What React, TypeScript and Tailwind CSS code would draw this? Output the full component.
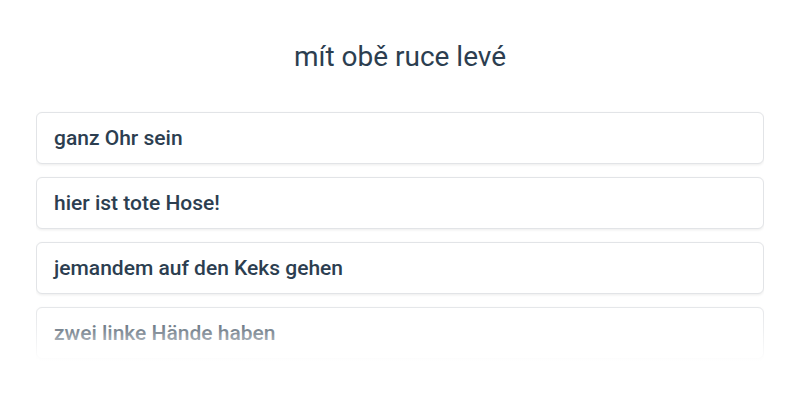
export default function App() {
  const items = [
    'ganz Ohr sein',
    'hier ist tote Hose!',
    'jemandem auf den Keks gehen',
    'zwei linke Hände haben',
  ]

  return (
    <div className="min-h-screen bg-white font-['Roboto',sans-serif] text-[#2c3e50]">
      <div className="px-9 pt-[39px]">
        <h1 className="text-center text-[28px] leading-9">mít obě ruce levé</h1>
        <div className="relative mt-9 h-[252px] overflow-hidden">
          <div className="flex flex-col gap-[13px] pt-px">
            {items.map(item => (
              <div
                key={item}
                className="flex h-[52px] items-center rounded-md border border-[#e2e4e7] bg-white px-[17px] pt-px text-[21px] font-medium shadow-[0_1px_3px_rgba(0,0,0,0.08)]"
              >
                {item}
              </div>
            ))}
          </div>
          {/* fade the last card out */}
          <div className="pointer-events-none absolute inset-x-0 bottom-0 h-[64px] bg-gradient-to-b from-white/0 via-white/40 to-white" />
        </div>
      </div>
    </div>
  )
}
